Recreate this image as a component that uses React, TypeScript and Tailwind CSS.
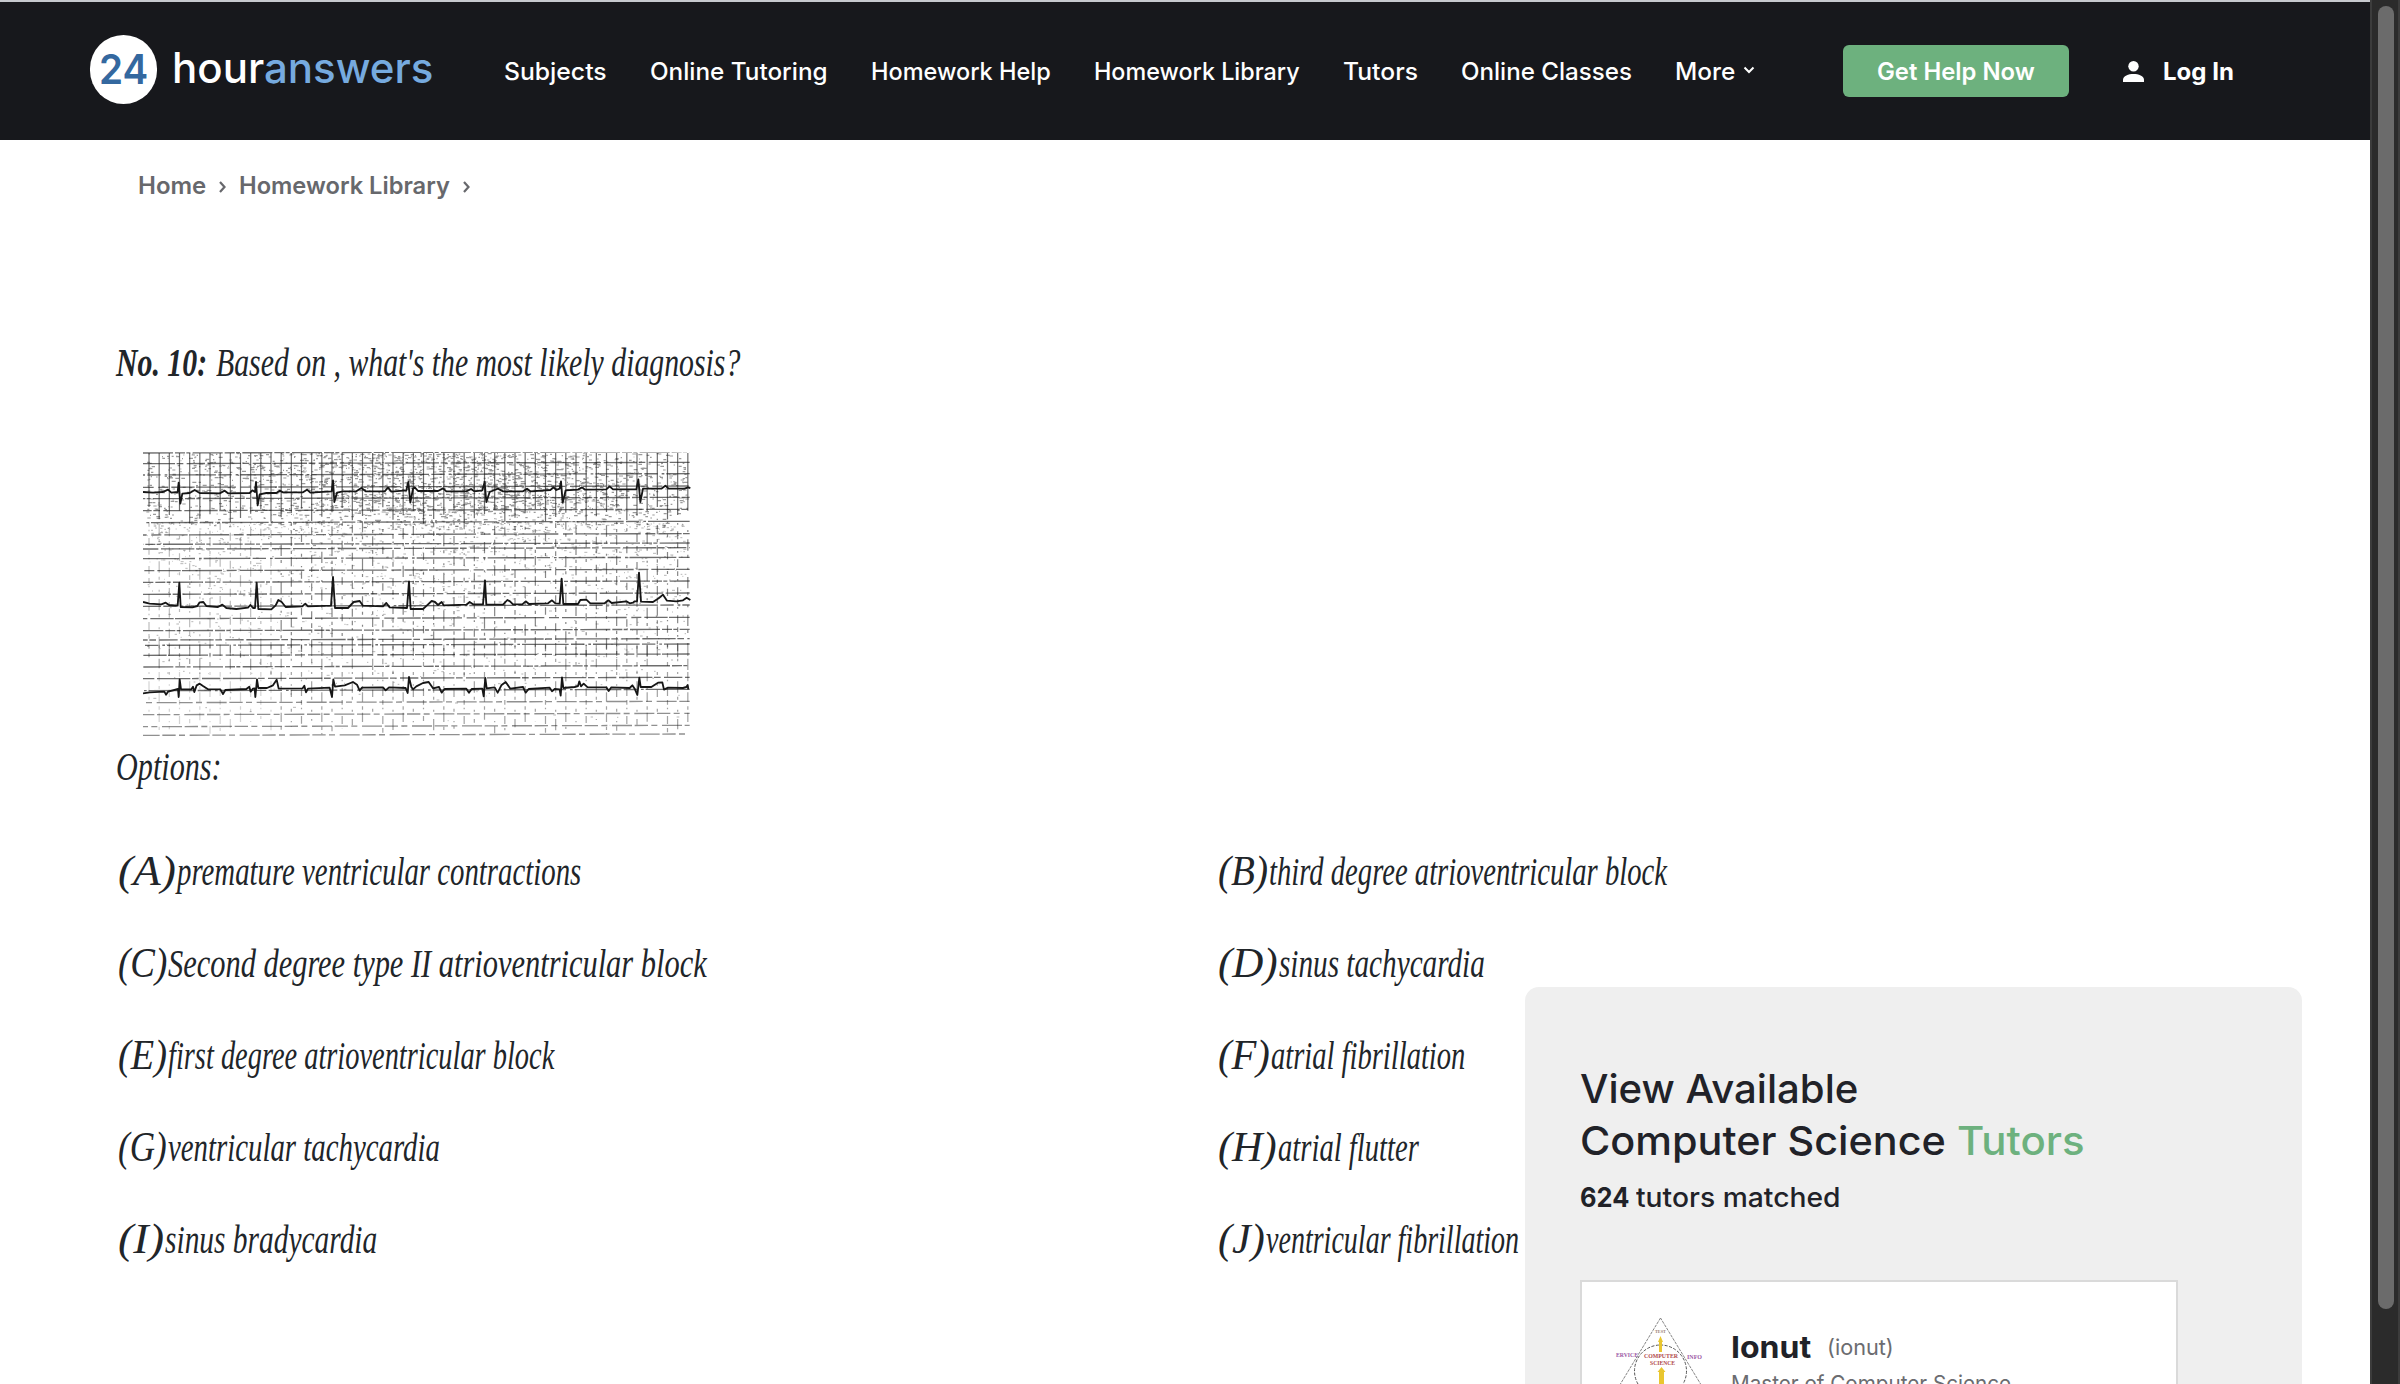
import { useLayoutEffect, useRef, useState } from "react";
import type { ReactNode } from "react";

/* Single line of text stretched or condensed to fill the width of its box. */
function Fit({ className, children }: { className: string; children: ReactNode }) {
  const box = useRef<HTMLSpanElement>(null);
  const text = useRef<HTMLSpanElement>(null);
  const [scale, setScale] = useState(1);
  useLayoutEffect(() => {
    if (box.current && text.current) setScale(box.current.clientWidth / text.current.offsetWidth);
  }, []);
  return (
    <span ref={box} className={`block shrink-0 whitespace-nowrap ${className}`}>
      <span ref={text} className="inline-block origin-left" style={{ transform: `scaleX(${scale})` }}>
        {children}
      </span>
    </span>
  );
}

function Logo() {
  return (
    <div className="mb-[3px] flex items-center">
      <div className="flex h-[69px] w-[67px] items-center justify-center rounded-full bg-white">
        <Fit className="mb-[2px] w-[49px] text-[41px] leading-[60px] font-semibold text-[#34689f]">24</Fit>
      </div>
      <div className="mb-[3px] ml-[15px] flex text-[42px] leading-[60px] font-medium">
        <Fit className="w-[92px] text-white">hour</Fit>
        <Fit className="w-[169px] text-[#76aadf]">answers</Fit>
      </div>
    </div>
  );
}

const nav = [
  { label: "Subjects", width: "w-[103px]" },
  { label: "Online Tutoring", width: "w-[178px]" },
  { label: "Homework Help", width: "w-[180px]" },
  { label: "Homework Library", width: "w-[206px]" },
  { label: "Tutors", width: "w-[75px]" },
  { label: "Online Classes", width: "w-[171px]" },
];

function Header() {
  return (
    <header className="flex h-[140px] items-center border-t-2 border-[#c6c9cd] bg-[#17181c] pl-[90px] text-white">
      <Logo />
      <nav className="mt-0.5 ml-[71px] flex gap-[43px] text-2xl leading-8 font-medium">
        {nav.map((n) => (
          <Fit key={n.label} className={n.width}>
            {n.label}
          </Fit>
        ))}
        <div className="flex items-center gap-2">
          <Fit className="w-[60px]">More</Fit>
          <svg className="mb-1" width="12" height="8" viewBox="0 0 12 8" fill="none" stroke="white" strokeWidth="2">
            <path d="M1.5 1.5 6 6l4.500-4.500" />
          </svg>
        </div>
      </nav>
      <button className="ml-[88px] flex h-[52px] w-[226px] items-center justify-center rounded-md bg-[#6db17e]">
        <Fit className="mt-0.5 w-[158px] text-left text-2xl leading-8 font-semibold">Get Help Now</Fit>
      </button>
      <svg className="ml-[54px]" width="21" height="21" viewBox="0 0 21 21" fill="white">
        <circle cx="10.500" cy="5.200" r="5.200" />
        <path d="M0 21v-2.200C0 15 5.500 13 10.500 13S21 15 21 18.800V21z" />
      </svg>
      <Fit className="mt-0.5 ml-[19px] w-[71px] text-2xl leading-8 font-bold">Log In</Fit>
    </header>
  );
}

function Chevron() {
  return (
    <svg className="mt-0.5" width="9" height="14" viewBox="0 0 9 14" fill="none" stroke="#67686c" strokeWidth="2.200">
      <path d="M2 2l4.500 5L2 12" />
    </svg>
  );
}

const rows = [
  43, 75, 109, 146, 180, 216, 252, 289, 317, 331, 360, 396, 431, 467, 503, 540, 576, 604, 620, 650, 685, 720, 756, 792,
  828, 864, 890,
];
const columns = Array.from({ length: 54 }, (_, i) => 58 + i * 30.5);

const traces = [
  "M40 160 70 162 100 160 115 153 125 162 144 160 147 132 152 195 158 165 180 163 195 154 210 163 270 164 285 156 295 164 360 163 368 155 376 160 379 130 384 200 390 167 410 163 440 163 450 156 460 161 520 161 532 153 542 162 606 158 610 125 614 190 622 162 640 158 680 158 695 148 708 158 765 158 775 147 785 159 830 155 836 130 842 192 850 150 856 147 865 157 925 157 940 149 950 158 1010 158 1024 151 1034 158 1058 155 1065 130 1070 190 1080 160 1105 150 1120 158 1180 158 1192 150 1202 158 1262 154 1272 146 1280 154 1290 150 1294 128 1299 192 1308 155 1345 153 1357 146 1366 153 1430 152 1440 143 1450 152 1520 152 1526 122 1532 190 1540 150 1595 150 1607 141 1617 150 1665 150 1675 146 1682 148",
  "M40 490 60 495 95 497 108 492 118 499 144 501 149 432 153 505 188 506 203 502 210 491 221 490 230 502 265 505 278 498 290 508 320 511 355 507 362 499 370 508 376 508 381 432 386 511 425 512 438 500 446 484 456 490 468 505 518 503 527 495 535 503 604 501 610 415 616 508 655 508 672 490 690 487 700 501 760 503 770 493 780 506 832 508 838 428 843 511 880 511 892 500 906 487 916 490 925 499 936 490 942 500 1010 498 1020 490 1030 497 1060 497 1066 425 1070 498 1120 498 1133 484 1141 488 1150 497 1178 497 1188 488 1198 496 1255 494 1267 485 1277 494 1290 495 1296 420 1301 496 1345 496 1352 484 1370 483 1382 494 1425 494 1436 485 1446 493 1490 488 1500 494 1510 492 1515 488 1522 488 1528 402 1534 489 1570 490 1588 478 1600 468 1612 486 1640 488 1660 485 1671 477 1682 484",
  "M40 764 60 761 104 759 109 768 115 759 145 751 147 775 150 722 154 752 185 752 190 744 194 760 201 740 210 735 220 742 235 752 272 752 280 766 287 754 350 751 359 744 363 759 370 750 375 749 377 775 382 722 386 748 412 748 430 740 441 723 447 750 519 749 524 741 529 761 535 750 600 747 607 775 611 722 616 744 645 740 670 730 682 738 690 756 697 747 760 746 768 755 778 746 828 748 834 763 838 715 845 745 850 752 860 743 880 733 897 730 910 749 928 745 936 762 945 751 1010 750 1018 762 1026 751 1058 750 1062 773 1067 718 1071 749 1095 746 1104 762 1115 740 1128 730 1142 750 1180 745 1188 762 1197 751 1260 747 1267 758 1275 751 1290 752 1293 771 1297 716 1301 748 1335 745 1345 742 1349 728 1354 743 1362 735 1374 746 1430 746 1437 757 1445 746 1500 748 1508 740 1516 752 1523 769 1529 717 1533 745 1565 745 1585 732 1598 731 1603 753 1615 747 1660 748 1670 745 1674 739 1676 752",
];

/* Deterministic generator so the paper grain is the same on each render. */
function grain() {
  let seed = 7;
  const next = () => {
    seed = (seed * 16807) % 2147483647;
    return seed / 2147483647;
  };
  let top = "";
  let rest = "";
  for (let i = 0; i < 3800; i++) {
    const x = 50 + next() * 1620;
    const centre = Math.exp(-(((x - 950) / 480) ** 2));
    const y = 45 + next() * (170 + next() * 70);
    if (next() < 0.3 + centre * 0.7) top += `M${x.toFixed(0)} ${y.toFixed(0)}h${(2 + next() * 10).toFixed(0)}`;
  }
  for (let i = 0; i < 1300; i++) {
    const x = 50 + next() * 1620;
    const y = 250 + next() * next() * 640;
    rest += `M${x.toFixed(0)} ${y.toFixed(0)}h${(2 + next() * 7).toFixed(0)}`;
  }
  return { top, rest };
}

const dots = grain();
const dashes = ["90 6 30 4 12 7", "55 8 100 5 20 10", "140 7 40 12 8 6", "30 9 70 4 120 14"];
const columnDashes = ["14 9 5 20 24 12", "6 22 34 12 9 30", "28 14 10 9", "9 28 4 12 22 35"];

function Ecg() {
  return (
    <svg className="block" width="548" height="288" viewBox="40 40 1644 864" fill="none" stroke="#222">
      {rows.map((y, i) => (
        <path
          key={y}
          d={`M40 ${y} 1680 ${y - 4}`}
          strokeWidth={4}
          opacity={i > 22 ? 0.5 : 0.66}
          strokeDasharray={i > 22 ? "40 10 18 14 60 8" : dashes[i % 4]}
          strokeDashoffset={i * 67}
        />
      ))}
      {columns.map((x, i) => (
        <g key={x} strokeWidth={3.6}>
          <path d={`M${x} 43V${205 + ((i * 37) % 50)}`} opacity={0.66} />
          <path
            d={`M${x} 250V${620 + ((i * 53) % 40)}`}
            opacity={i < 13 ? 0.3 : 0.55}
            strokeDasharray={columnDashes[i % 4]}
            strokeDashoffset={i * 23}
          />
          <path
            d={`M${x} 618V${660 + ((i * 29) % 50)}`}
            opacity={0.42}
            strokeDasharray={i % 3 === 0 ? "12 14" : "34 8"}
          />
          <path
            d={`M${x} 700V${840 + ((i * 41) % 50)}`}
            opacity={i < 13 ? 0.2 : 0.42}
            strokeDasharray={columnDashes[(i + 1) % 4]}
          />
        </g>
      ))}
      <path d={dots.top} strokeWidth={3.6} opacity={0.46} />
      <path d={dots.rest} strokeWidth={3} opacity={0.32} />
      {traces.map((d) => (
        <path key={d.slice(0, 20)} d={d} stroke="#161616" strokeWidth={5.5} strokeLinejoin="round" />
      ))}
    </svg>
  );
}

type Option = { letter: string; letterWidth: string; text: string; width: string };

const options: Option[] = [
  { letter: "(A)", letterWidth: "w-[58px]", text: "premature ventricular contractions", width: "w-[404px]" },
  { letter: "(B)", letterWidth: "w-[50px]", text: "third degree atrioventricular block", width: "w-[398px]" },
  { letter: "(C)", letterWidth: "w-[49px]", text: "Second degree type II atrioventricular block", width: "w-[539px]" },
  { letter: "(D)", letterWidth: "w-[60px]", text: "sinus tachycardia", width: "w-[206px]" },
  { letter: "(E)", letterWidth: "w-[49px]", text: "first degree atrioventricular block", width: "w-[386px]" },
  { letter: "(F)", letterWidth: "w-[52px]", text: "atrial fibrillation", width: "w-[194px]" },
  { letter: "(G)", letterWidth: "w-[49px]", text: "ventricular tachycardia", width: "w-[272px]" },
  { letter: "(H)", letterWidth: "w-[59px]", text: "atrial flutter", width: "w-[141px]" },
  { letter: "(I)", letterWidth: "w-[46px]", text: "sinus bradycardia", width: "w-[212px]" },
  { letter: "(J)", letterWidth: "w-[47px]", text: "ventricular fibrillation", width: "w-[253px]" },
];

function Question() {
  return (
    <main className="pl-[116px] font-['Liberation_Serif',serif] text-[39px] leading-[46px] text-[#212529] italic">
      <div className="mt-[138px] flex">
        <Fit className="w-[91px] font-bold">No. 10:</Fit>
        <Fit className="ml-[9px] w-[524px]">Based on , what's the most likely diagnosis?</Fit>
      </div>
      <div className="mt-[66px] ml-[27px]">
        <Ecg />
      </div>
      <Fit className="mt-1 w-[106px]">Options:</Fit>
      <div className="mt-[35px] grid grid-cols-[1100px_1fr] pl-0.5">
        {options.map((o) => (
          <div key={o.letter} className="flex h-[92px] items-baseline pt-[23px]">
            <Fit className={`text-[43px] leading-[46px] ${o.letterWidth}`}>{o.letter}</Fit>
            <Fit className={`ml-px ${o.width}`}>{o.text}</Fit>
          </div>
        ))}
      </div>
    </main>
  );
}

function Avatar() {
  return (
    <svg className="shrink-0" width="110" height="110" viewBox="1605 1310 110 110" fill="none">
      <path d="M1660.500 1319 1604 1412H1717Z" stroke="#777" strokeWidth="0.900" strokeDasharray="3 1" />
      <circle cx="1660.500" cy="1372" r="26" stroke="#555" strokeWidth="1" strokeDasharray="3 1.500" />
      <path d="M1660.500 1337l2.500 6h-1v10h-3v-10h-1z" fill="#e9c62f" />
      <path d="M1661.500 1368l4 5h-1.500v18h-5v-18h-1.500z" fill="#e9c62f" />
      <g className="font-['Liberation_Serif',serif] font-bold" fontSize="6">
        <text x="1655" y="1334" textLength="11" lengthAdjust="spacingAndGlyphs" fill="#9a8170" fontSize="5">TEST</text>
        <text x="1616" y="1358" textLength="22" lengthAdjust="spacingAndGlyphs" fill="#9b58a5">ERVICE</text>
        <text x="1644" y="1359" textLength="34" lengthAdjust="spacingAndGlyphs" fill="#b0494b" fontSize="7">COMPUTER</text>
        <text x="1650" y="1366" textLength="25" lengthAdjust="spacingAndGlyphs" fill="#b0494b" fontSize="7">SCIENCE</text>
        <text x="1687" y="1360" textLength="15" lengthAdjust="spacingAndGlyphs" fill="#9b58a5">INFO</text>
      </g>
    </svg>
  );
}

function TutorPanel() {
  return (
    <aside className="absolute top-[987px] left-[1525px] h-[420px] w-[777px] rounded-t-[14px] bg-[#efefef] pt-[76px] pl-[55px] text-[#212228]">
      <div className="text-[40px] leading-[52px] font-medium">
        <Fit className="w-[278px]">View Available</Fit>
        <div className="flex gap-[11px]">
          <Fit className="w-[366px]">Computer Science</Fit>
          <Fit className="w-[128px] text-[#6db17e]">Tutors</Fit>
        </div>
      </div>
      <div className="mt-[13px] flex gap-[7px] text-[27px] leading-9">
        <Fit className="w-[49px] font-bold">624</Fit>
        <Fit className="w-[204px] font-medium">tutors matched</Fit>
      </div>
      <div className="mt-16 flex h-[200px] w-[598px] border-2 border-[#dadada] bg-white pt-[27px] pl-[23px]">
        <Avatar />
        <div className="ml-4 pt-[18px] text-[#6b6c70]">
          <div className="flex items-center gap-4">
            <Fit className="w-[80px] text-[30px] leading-10 font-bold text-[#212228]">Ionut</Fit>
            <Fit className="w-[67px] text-[22px] leading-10">(ionut)</Fit>
          </div>
          <Fit className="w-[280px] text-[22px] leading-8">Master of Computer Science</Fit>
        </div>
      </div>
    </aside>
  );
}

export default function App() {
  return (
    <div className="flex h-[1384px] w-[2400px] overflow-hidden bg-white font-[Inter,sans-serif]">
      <div className="relative h-full w-[2370px] overflow-hidden">
        <Header />
        <div className="mt-[30px] flex items-center pl-[138px] text-2xl leading-8 font-semibold text-[#67686c]">
          <Fit className="mr-3 w-[68px]">Home</Fit>
          <Chevron />
          <Fit className="mr-3 ml-3 w-[211px]">Homework Library</Fit>
          <Chevron />
        </div>
        <Question />
        <TutorPanel />
      </div>
      <div className="h-full w-[30px] border-x-2 border-[#3c3c3c] bg-[#2b2b2b] pt-1.5 pl-1.5">
        <div className="h-[1303px] w-4 rounded-full bg-[#6b6b6b]" />
      </div>
    </div>
  );
}
